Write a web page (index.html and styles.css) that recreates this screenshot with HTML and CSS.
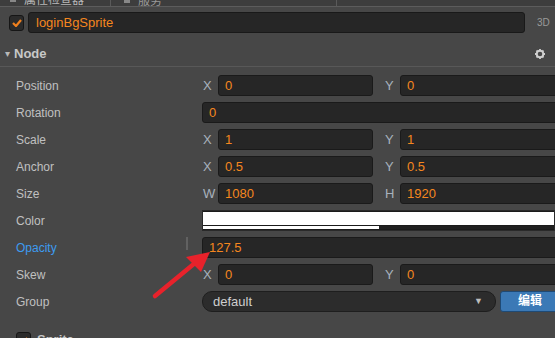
FILE: index.html
```html
<!DOCTYPE html>
<html lang="en">
<head>
    <meta charset="UTF-8">
    <title>Inspector</title>
    <link rel="stylesheet" href="styles.css">
</head>
<body>

<div class="tabs">
    <div class="tab active"><span class="tab-icon"></span>属性检查器</div>
    <div class="tab"><span class="tab-icon"></span>服务</div>
</div>

<div class="name-row">
    <div class="checkbox">
        <svg width="10" height="8" viewBox="0 0 10 8"><path d="M1 4 L4 7 L9 1" stroke="#f0801e" stroke-width="2.2" fill="none"/></svg>
    </div>
    <div class="name-input">loginBgSprite</div>
    <div class="tag-3d">3D</div>
</div>

<div class="section-head">
    <span class="caret">&#9662;</span>
    <span class="section-title">Node</span>
    <svg class="gear" width="10" height="10" viewBox="0 0 10 10">
        <circle cx="5" cy="5" r="3.3" fill="none" stroke="#cfcfcf" stroke-width="2"/>
        <path d="M5 0 V2 M5 8 V10 M0 5 H2 M8 5 H10 M1.5 1.5 L2.8 2.8 M7.2 7.2 L8.5 8.5 M1.5 8.5 L2.8 7.2 M7.2 2.8 L8.5 1.5" stroke="#cfcfcf" stroke-width="1.8"/>
    </svg>
</div>

<div class="props">
    <div class="row">
        <div class="label">Position</div>
        <div class="vec">
            <span class="axis">X</span><div class="field">0</div>
            <span class="axis">Y</span><div class="field">0</div>
        </div>
    </div>
    <div class="row">
        <div class="label">Rotation</div>
        <div class="field">0</div>
    </div>
    <div class="row">
        <div class="label">Scale</div>
        <div class="vec">
            <span class="axis">X</span><div class="field">1</div>
            <span class="axis">Y</span><div class="field">1</div>
        </div>
    </div>
    <div class="row">
        <div class="label">Anchor</div>
        <div class="vec">
            <span class="axis">X</span><div class="field">0.5</div>
            <span class="axis">Y</span><div class="field">0.5</div>
        </div>
    </div>
    <div class="row">
        <div class="label">Size</div>
        <div class="vec">
            <span class="axis">W</span><div class="field">1080</div>
            <span class="axis">H</span><div class="field">1920</div>
        </div>
    </div>
    <div class="row">
        <div class="label">Color</div>
        <div class="color-box">
            <div class="color-main"></div>
            <div class="color-alpha"><div class="alpha-fill" style="width: 50%;"></div></div>
        </div>
    </div>
    <div class="row">
        <div class="label active-label">Opacity<span class="drag-bar"></span></div>
        <div class="field">127.5</div>
    </div>
    <div class="row">
        <div class="label">Skew</div>
        <div class="vec">
            <span class="axis">X</span><div class="field">0</div>
            <span class="axis">Y</span><div class="field">0</div>
        </div>
    </div>
    <div class="row">
        <div class="label">Group</div>
        <div class="group-field">
            <div class="select">default<span class="select-arrow">&#9660;</span></div>
            <div class="btn">编辑</div>
        </div>
    </div>
</div>

<div class="section-head sub">
    <div class="checkbox small">
        <svg width="8" height="6" viewBox="0 0 10 8"><path d="M1 4 L4 7 L9 1" stroke="#f0801e" stroke-width="2.2" fill="none"/></svg>
    </div>
    <span class="section-title">Sprite</span>
</div>

<svg class="arrow" width="555" height="338" viewBox="0 0 555 338">
    <line x1="155" y1="296" x2="195" y2="263" stroke="#e8222b" stroke-width="4.5" stroke-linecap="round"/>
    <polygon points="210,252 186,257 201,272" fill="#e8222b"/>
</svg>

</body>
</html>
```

FILE: styles.css
```css
body {
    font-family: 'Liberation Sans', Arial, 'Noto Sans CJK SC', sans-serif;
    margin: 0;
    padding: 0;
    width: 555px;
    height: 338px;
    overflow: hidden;
    background-color: #474747;
    color: #c4c4c4;
    font-size: 12px;
    position: relative;
}

.tabs {
    height: 6px;
    overflow: hidden;
    display: flex;
    background-color: #3d3d3d;
    border-bottom: 1px solid #5c5c5c;
    padding-left: 10px;
}

.tab {
    display: flex;
    align-items: center;
    gap: 8px;
    height: 14px;
    margin-top: -9px;
    padding: 0 12px 0 0;
    font-size: 12px;
    color: #b8b8b8;
    white-space: nowrap;
}

.tab.active {
    width: 76px;
    margin-right: 12px;
}

.tab:not(.active) {
    border: 1px solid #5a5a5a;
    padding-left: 13px;
    width: 200px;
    color: #999;
}

.tab-icon {
    width: 6px;
    height: 6px;
    background-color: #888;
    margin-top: 2px;
}

.name-row {
    display: flex;
    align-items: center;
    padding: 5px 0 0 9px;
    height: 21px;
}

.checkbox {
    width: 13px;
    height: 14px;
    background-color: #2b2b2b;
    border: 1px solid #161616;
    border-radius: 3px;
    display: flex;
    align-items: center;
    justify-content: center;
    margin-right: 4px;
}

.name-input {
    width: 488px;
    height: 19px;
    line-height: 19px;
    background-color: #262626;
    border: 1px solid #191919;
    border-radius: 3px;
    padding-left: 7px;
    color: #f5871f;
    font-size: 13px;
}

.tag-3d {
    margin-left: 12px;
    color: #9a9a9a;
    font-size: 10px;
}

.section-head {
    display: flex;
    align-items: center;
    margin-top: 10px;
    height: 21px;
    padding-left: 5px;
    padding-bottom: 2px;
    border-bottom: 1px solid #585858;
}

.caret {
    font-size: 10px;
    color: #b8b8b8;
    margin-right: 4px;
}

.section-title {
    font-weight: bold;
    font-size: 13px;
    color: #c8c8c8;
}

.gear {
    margin-left: auto;
    margin-right: 10px;
}

.props {
    width: 566px;
    padding-top: 5px;
}

.row {
    display: flex;
    align-items: center;
    height: 27px;
}

.label {
    width: 202px;
    padding-left: 16px;
    box-sizing: border-box;
    flex-shrink: 0;
    position: relative;
    color: #c0c0c0;
}

.active-label {
    color: #3d9bf0;
}

.drag-bar {
    position: absolute;
    right: 14px;
    top: -4px;
    width: 2px;
    height: 13px;
    background-color: #616161;
}

.vec {
    display: grid;
    grid-template-columns: 16px 155px 11px 16px 1fr;
    align-items: center;
    flex: 1;
}

.vec .field:nth-of-type(1) {
    grid-column: 2;
}

.axis {
    color: #a7b2bd;
    font-size: 13px;
    padding-left: 1px;
}

.vec .axis:nth-of-type(2) {
    grid-column: 4;
}

.field {
    flex: 1;
    height: 19px;
    line-height: 19px;
    background-color: #262626;
    border: 1px solid #1a1a1a;
    border-radius: 3px;
    padding-left: 6px;
    color: #f5871f;
    font-size: 13px;
}

.color-box {
    flex: 1;
    height: 21px;
    margin-right: 11px;
    background-color: #1b1b1b;
    border: 1px solid #2a2a2a;
    box-sizing: border-box;
    display: flex;
    flex-direction: column;
    padding: 1px 0 1px 0;
}

.color-main {
    height: 13px;
    background-color: #ffffff;
}

.color-alpha {
    margin-top: 1px;
    height: 3px;
    background-color: #202020;
}

.alpha-fill {
    height: 100%;
    background-color: #ffffff;
}

.group-field {
    display: flex;
    align-items: center;
    flex: 1;
    gap: 4px;
}

.select {
    width: 282px;
    height: 19px;
    line-height: 19px;
    background-color: #2c2c2c;
    border: 1px solid #1e1e1e;
    border-radius: 10px;
    padding-left: 10px;
    color: #cfcfcf;
    font-size: 13px;
    position: relative;
}

.select-arrow {
    position: absolute;
    right: 12px;
    top: 0;
    font-size: 9px;
    color: #bdbdbd;
}

.btn {
    width: 60px;
    height: 19px;
    line-height: 19px;
    background-color: #3b79b6;
    border: 1px solid #1f4a75;
    border-radius: 3px;
    color: #ffffff;
    font-weight: bold;
    font-size: 12px;
    padding-left: 17px;
}

.section-head.sub {
    margin-top: 17px;
    padding-left: 16px;
    border-bottom: none;
    align-items: flex-start;
}

.checkbox.small {
    width: 13px;
    height: 13px;
    margin-right: 6px;
}

.arrow {
    position: absolute;
    left: 0;
    top: 0;
    pointer-events: none;
}
```
